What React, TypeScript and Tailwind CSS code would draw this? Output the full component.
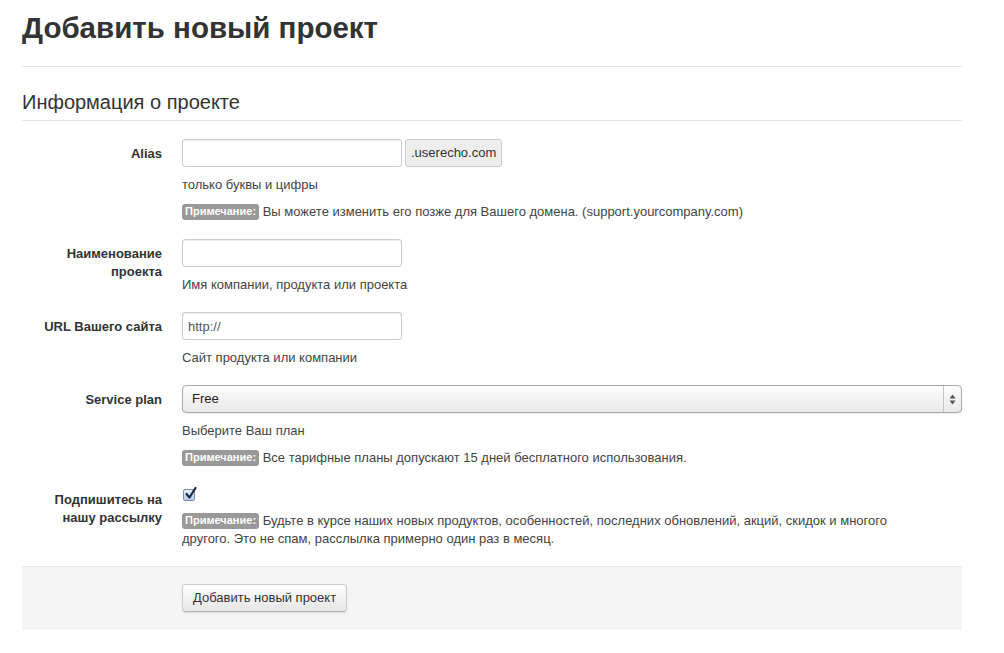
import React from 'react';

const font = { fontFamily: '"Liberation Sans", Arial, Helvetica, sans-serif' };

function Note({ children, wide = true }: { children: React.ReactNode; wide?: boolean }) {
    return (
        <p
            className={
                'mt-[9px] text-[13px] leading-[18px] text-[#444] ' +
                (wide ? '' : 'max-w-[720px]')
            }
        >
            <span className="inline-block rounded-[3px] bg-[#999] px-[3px] pt-px pb-[2px] align-[1px] text-[11px] font-bold leading-[13px] text-white">
                Примечание:
            </span>{' '}
            {children}
        </p>
    );
}

function Help({ children }: { children: React.ReactNode }) {
    return <p className="mt-[9px] text-[13px] leading-[18px] text-[#444]">{children}</p>;
}

function Group({ label, children }: { label: React.ReactNode; children: React.ReactNode }) {
    return (
        <div className="mb-[18px] flex">
            <div className="w-[140px] shrink-0 pt-[6px] text-right text-[13px] font-bold leading-[18px] text-[#333]">
                {label}
            </div>
            <div className="ml-[20px] flex-1">{children}</div>
        </div>
    );
}

function TextInput({ value = '' }: { value?: string }) {
    return (
        <input
            type="text"
            defaultValue={value}
            className="h-[28px] w-[220px] rounded-[3px] border border-[#ccc] bg-white px-[5px] text-[13px] leading-[18px] text-[#555] shadow-[inset_0_1px_1px_rgba(0,0,0,0.08)] outline-none"
            style={font}
        />
    );
}

export default function App() {
    return (
        <div className="min-h-[653px] bg-white text-[#333]" style={font}>
            <div className="ml-[22px] w-[940px]">
                {/* Page header */}
                <div className="border-b border-[#e5e5e5] pt-[10px] pb-[20px]">
                    <h1 className="text-[29.5px] font-bold leading-[36px] text-[#333]">
                        Добавить новый проект
                    </h1>
                </div>

                <form className="mt-[17px]">
                    <div className="mb-[18px] h-[37px] border-b border-[#e5e5e5] text-[20px] leading-[36px] text-[#333]">
                        Информация о проекте
                    </div>

                    <Group label="Alias">
                        <div className="flex items-center gap-[3px]">
                            <TextInput />
                            <span className="flex h-[28px] items-center rounded-[3px] border border-[#ccc] bg-[#eee] px-[5px] text-[13px] text-[#333]">
                                .userecho.com
                            </span>
                        </div>
                        <Help>только буквы и цифры</Help>
                        <Note>
                            Вы можете изменить его позже для Вашего домена. (support.yourcompany.com)
                        </Note>
                    </Group>

                    <Group
                        label={
                            <>
                                Наименование
                                <br />
                                проекта
                            </>
                        }
                    >
                        <TextInput />
                        <Help>Имя компании, продукта или проекта</Help>
                    </Group>

                    <Group label="URL Вашего сайта">
                        <TextInput value="http://" />
                        <Help>Сайт продукта или компании</Help>
                    </Group>

                    <Group label="Service plan">
                        <div className="flex h-[28px] w-full items-stretch rounded-[4px] border border-[#aaa] bg-gradient-to-b from-[#fdfdfd] to-[#e9e9e9] shadow-[0_1px_1px_rgba(0,0,0,0.08)]">
                            <span className="flex flex-1 items-center pl-[9px] text-[13px] text-[#222]">
                                Free
                            </span>
                            <span className="flex w-[18px] items-center justify-center border-l border-[#c4c4c4]">
                                <svg width="7" height="11" viewBox="0 0 7 11">
                                    <path d="M3.5 0.5 L6.5 4.5 L0.5 4.5 Z" fill="#555" />
                                    <path d="M0.5 6.5 L6.5 6.5 L3.5 10.5 Z" fill="#555" />
                                </svg>
                            </span>
                        </div>
                        <Help>Выберите Ваш план</Help>
                        <Note>Все тарифные планы допускают 15 дней бесплатного использования.</Note>
                    </Group>

                    <Group
                        label={
                            <>
                                Подпишитесь на
                                <br />
                                нашу рассылку
                            </>
                        }
                    >
                        <div className="flex h-[18px] items-center pt-px pl-px">
                            <span className="relative block h-[12px] w-[12px] rounded-[2px] border border-[#7d8ea8] bg-gradient-to-b from-[#e6effa] to-[#b9cbe6]">
                                <svg
                                    className="absolute -top-[3px] left-px"
                                    width="12"
                                    height="13"
                                    viewBox="0 0 12 13"
                                >
                                    <path
                                        d="M1.5 7 L4.5 10.5 L10.5 1"
                                        fill="none"
                                        stroke="#1c2a4a"
                                        strokeWidth="2.2"
                                        strokeLinecap="round"
                                        strokeLinejoin="round"
                                    />
                                </svg>
                            </span>
                        </div>
                        <Note wide={false}>
                            Будьте в курсе наших новых продуктов, особенностей, последних обновлений,
                            акций, скидок и многого другого. Это не спам, расслылка примерно один раз в
                            месяц.
                        </Note>
                    </Group>

                    <div className="border-t border-[#e5e5e5] bg-[#f5f5f5] pt-[17px] pb-[18px] pl-[160px]">
                        <button
                            type="button"
                            className="h-[28px] rounded-[4px] border border-[#ccc] border-b-[#b3b3b3] bg-gradient-to-b from-white to-[#e6e6e6] px-[10px] text-[13px] leading-[18px] text-[#333] shadow-[0_1px_2px_rgba(0,0,0,0.1)]"
                            style={font}
                        >
                            Добавить новый проект
                        </button>
                    </div>
                </form>
            </div>
        </div>
    );
}
